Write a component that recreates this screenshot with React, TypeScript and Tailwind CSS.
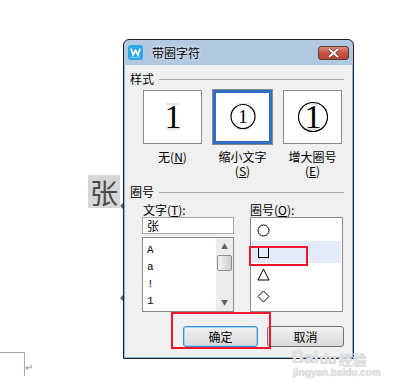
import type { ReactNode } from 'react';

const cjk = "font-['SimSun','Noto_Sans_CJK_SC',sans-serif]";

function Hotkey({ k }: { k: string }) {
  return (
    <span>
      (<span className="underline underline-offset-1">{k}</span>)
    </span>
  );
}

function GroupLabel({ children }: { children: ReactNode }) {
  return (
    <div className="flex h-[14px] items-center pl-[5px] pr-[8px]">
      <span className="text-[12px] leading-[14px]">{children}</span>
      <div className="ml-[5px] h-px flex-1 bg-[#b4aca8]" />
    </div>
  );
}

// 样式 previews: guide lines + "1", optionally inside a circle
function Preview({ kind, selected }: { kind: 'none' | 'small' | 'big'; selected?: boolean }) {
  return (
    <div
      className={`flex h-[54px] w-[59px] items-center justify-center bg-white ${
        selected ? 'border-[3px] border-[#2f6fc0] outline outline-1 outline-[#8a8a8a]' : 'border border-[#8a8a8a]'
      }`}
    >
      <svg width="40" height="40" viewBox="0 0 40 40">
        <line x1="13" y1="7" x2="27" y2="7" stroke="#c8c8c8" strokeWidth="1" />
        <line x1="13" y1="32" x2="27" y2="32" stroke="#c8c8c8" strokeWidth="1" />
        {kind === 'small' && <circle cx="20" cy="19.5" r="12" fill="none" stroke="#000" strokeWidth="1.2" />}
        {kind === 'big' && <circle cx="20" cy="20" r="14.5" fill="none" stroke="#000" strokeWidth="1.2" />}
        <text
          x="20"
          y={kind === 'small' ? 26 : 31}
          textAnchor="middle"
          fontFamily="Liberation Serif, serif"
          fontSize={kind === 'small' ? 19 : 34}
          fill="#000"
        >
          1
        </text>
      </svg>
    </div>
  );
}

function Shape({ kind }: { kind: 'circle' | 'square' | 'triangle' | 'diamond' }) {
  return (
    <svg width="13" height="13" viewBox="0 0 13 13">
      {kind === 'circle' && <circle cx="6.5" cy="6.5" r="5.5" fill="none" stroke="#000" />}
      {kind === 'square' && <rect x="1.5" y="1.5" width="10" height="10" fill="none" stroke="#000" />}
      {kind === 'triangle' && <polygon points="6.5,1 12,12 1,12" fill="none" stroke="#000" />}
      {kind === 'diamond' && <polygon points="6.5,1 12,6.5 6.5,12 1,6.5" fill="none" stroke="#000" />}
    </svg>
  );
}

function WpsIcon() {
  return (
    <svg width="15" height="15" viewBox="0 0 15 15">
      <rect x="0" y="0" width="15" height="15" rx="3" fill="#2ea6ea" />
      <polyline points="3,3.5 5,10 7.5,5.5 10,10 12,3.5" fill="none" stroke="#fff" strokeWidth="1.6" />
      <g fill="#ffffff" opacity="0.8">
        <circle cx="3" cy="12.5" r="0.6" />
        <circle cx="5" cy="12" r="0.6" />
        <circle cx="7" cy="12.5" r="0.6" />
        <circle cx="9" cy="12" r="0.6" />
        <circle cx="11" cy="12.5" r="0.6" />
      </g>
    </svg>
  );
}

export default function App() {
  return (
    <div className={`relative h-[386px] w-[409px] overflow-hidden bg-white text-black ${cjk}`}>
      {/* document text behind the dialog */}
      <div className="absolute left-[88px] top-[175px] flex h-[33px] w-[32px] items-center justify-center bg-[#d6d6d6] text-[28px] leading-none text-[#4a4a4a]">
        张
      </div>
      <div className="absolute left-[120px] top-[203px] h-0 w-0 border-y-[3px] border-r-[3px] border-y-transparent border-r-[#666]" />
      <div className="absolute left-[120px] top-[295px] h-0 w-0 border-y-[3px] border-r-[3px] border-y-transparent border-r-[#666]" />

      {/* page corner mark */}
      <div className="absolute left-0 top-[352px] h-[24px] w-[25px] border-r border-t border-[#b0a8a8]" />
      <div className="absolute left-[25px] top-[362px] text-[10px] leading-none text-[#8a8a8a]">↵</div>

      {/* dialog */}
      <div className="absolute left-[123px] top-[39px] flex h-[320px] w-[231px] flex-col rounded-t-[6px] border border-[#1e1e1e] bg-gradient-to-b from-[#b3c9e2] to-[#a2bddb]">
        <div className="flex h-[25px] shrink-0 items-center pl-[4px] pr-[4px]">
          <WpsIcon />
          <span className="ml-[9px] text-[12px] leading-none [text-shadow:0_0_4px_#ffffff]">带圈字符</span>
          <div className="ml-auto flex h-[14px] w-[31px] items-center justify-center rounded-[3px] border border-[#5a3a36] bg-gradient-to-b from-[#d98a7c] via-[#c75444] to-[#b8432f]">
            <svg width="13" height="10" viewBox="0 0 13 10">
              <path d="M2 1 L11 9 M11 1 L2 9" stroke="#4a2a26" strokeWidth="3.2" />
              <path d="M2 1 L11 9 M11 1 L2 9" stroke="#ffffff" strokeWidth="2" />
            </svg>
          </div>
        </div>

        <div className="flex flex-1 flex-col border-x border-b border-[#86b7e6] bg-[#f0f0f0] pt-[7px]">
          <GroupLabel>样式</GroupLabel>

          <div className="mt-[4px] flex gap-[11px] pl-[18px]">
            <div className="flex w-[59px] flex-col items-center">
              <Preview kind="none" />
              <div className="mt-[6px] text-[12px] leading-[14px]">
                无<Hotkey k="N" />
              </div>
            </div>
            <div className="flex w-[59px] flex-col items-center">
              <Preview kind="small" selected />
              <div className="mt-[6px] flex flex-col items-center text-[12px] leading-[14px]">
                <span>缩小文字</span>
                <Hotkey k="S" />
              </div>
            </div>
            <div className="flex w-[59px] flex-col items-center">
              <Preview kind="big" />
              <div className="mt-[6px] flex flex-col items-center text-[12px] leading-[14px]">
                <span>增大圈号</span>
                <Hotkey k="E" />
              </div>
            </div>
          </div>

          <div className="mt-[7px]">
            <GroupLabel>圈号</GroupLabel>
          </div>

          <div className="mt-[5px] flex gap-[16px] pl-[17px]">
            <div className="flex w-[92px] flex-col">
              <div className="h-[13px] pl-[1px] text-[12px] leading-[12px]">
                文字<Hotkey k="T" />:
              </div>
              <div className="flex h-[17px] items-center border border-[#a8a8a8] bg-white pl-[4px] text-[12px] leading-none">
                张
              </div>
              <div className="mt-[3px] flex h-[75px] border border-[#8a8a8a] bg-white">
                <div className="flex flex-1 flex-col pl-[4px] pt-[4px] font-['Liberation_Mono',monospace] text-[11px] leading-[17px]">
                  <span>A</span>
                  <span>a</span>
                  <span>!</span>
                  <span>1</span>
                </div>
                <div className="flex w-[17px] flex-col items-center bg-[#ececec]">
                  <div className="flex h-[17px] items-center text-[7px] text-[#606060]">▲</div>
                  <div className="h-[16px] w-[15px] rounded-[2px] border border-[#8f8f8f] bg-gradient-to-r from-[#f4f4f4] to-[#cfcfcf]" />
                  <div className="flex-1" />
                  <div className="flex h-[17px] items-center text-[7px] text-[#606060]">▼</div>
                </div>
              </div>
            </div>

            <div className="flex w-[93px] flex-col">
              <div className="h-[13px] text-[12px] leading-[12px]">
                圈号<Hotkey k="O" />:
              </div>
              <div className="flex h-[95px] flex-col border border-[#8a8a8a] bg-white pt-[1px]">
                <div className="flex h-[22px] items-center pl-[6px]">
                  <Shape kind="circle" />
                </div>
                <div className="mx-[1px] flex h-[22px] items-center bg-[#e3ebf9] pl-[5px]">
                  <Shape kind="square" />
                </div>
                <div className="flex h-[22px] items-center pl-[6px]">
                  <Shape kind="triangle" />
                </div>
                <div className="flex h-[22px] items-center pl-[6px]">
                  <Shape kind="diamond" />
                </div>
              </div>
            </div>
          </div>

          <div className="mt-[14px] flex justify-end gap-[9px] pr-[8px]">
            <button className="h-[21px] w-[75px] rounded-[3px] border border-[#3d8ed0] bg-gradient-to-b from-[#f2f2f2] to-[#d8d8d8] text-[12px] leading-none shadow-[inset_0_0_0_1px_#9fd3f5]">
              确定
            </button>
            <button className="h-[21px] w-[77px] rounded-[3px] border border-[#707070] bg-gradient-to-b from-[#f2f2f2] to-[#d8d8d8] text-[12px] leading-none">
              取消
            </button>
          </div>
        </div>
      </div>

      {/* red highlight boxes */}
      <div className="absolute left-[249px] top-[246px] h-[20px] w-[59px] border-2 border-[#f0142d]" />
      <div className="absolute left-[171px] top-[312px] h-[37px] w-[100px] border-2 border-[#f0142d]" />

      {/* watermark */}
      <div className="absolute left-[292px] top-[349px] flex items-end font-['Liberation_Sans',sans-serif] font-bold text-[#e2e2e2] [text-shadow:0_0_1px_#b8b8b8]">
        <span className="text-[17px] leading-none">Bai</span>
        <span className="ml-[1px] text-[14px] leading-none">du</span>
        <span className={`ml-[2px] text-[14px] leading-none ${cjk}`}>经验</span>
      </div>
      <div className="absolute left-[293px] top-[368px] font-['Liberation_Sans',sans-serif] text-[10px] font-bold leading-none text-[#e4e4e4] [text-shadow:0_0_1px_#c0c0c0]">
        jingyan.baidu.com
      </div>
    </div>
  );
}
